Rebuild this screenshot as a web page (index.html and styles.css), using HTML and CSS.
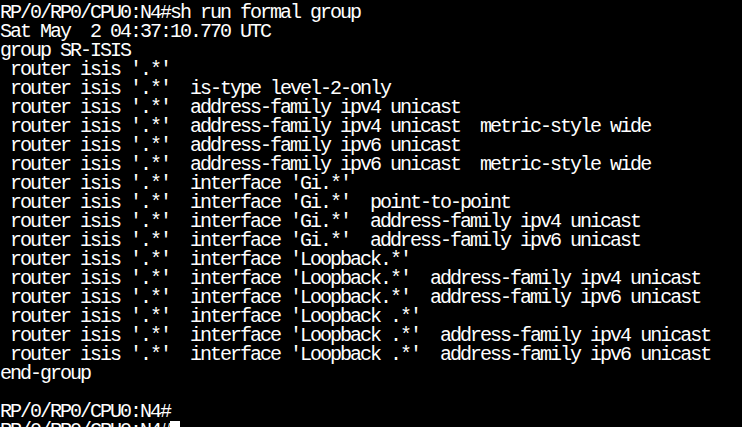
FILE: index.html
```html
<!DOCTYPE html>
<html>
<head>
<meta charset="utf-8">
<link rel="stylesheet" href="styles.css">
</head>
<body>
<pre class="term">RP/0/RP0/CPU0:N4#sh run formal group
Sat May  2 04:37:10.770 UTC
group SR-ISIS
 router isis '.*'
 router isis '.*'  is-type level-2-only
 router isis '.*'  address-family ipv4 unicast
 router isis '.*'  address-family ipv4 unicast  metric-style wide
 router isis '.*'  address-family ipv6 unicast
 router isis '.*'  address-family ipv6 unicast  metric-style wide
 router isis '.*'  interface 'Gi.*'
 router isis '.*'  interface 'Gi.*'  point-to-point
 router isis '.*'  interface 'Gi.*'  address-family ipv4 unicast
 router isis '.*'  interface 'Gi.*'  address-family ipv6 unicast
 router isis '.*'  interface 'Loopback.*'
 router isis '.*'  interface 'Loopback.*'  address-family ipv4 unicast
 router isis '.*'  interface 'Loopback.*'  address-family ipv6 unicast
 router isis '.*'  interface 'Loopback .*'
 router isis '.*'  interface 'Loopback .*'  address-family ipv4 unicast
 router isis '.*'  interface 'Loopback .*'  address-family ipv6 unicast
end-group

RP/0/RP0/CPU0:N4#
RP/0/RP0/CPU0:N4#<span class="cursor"> </span></pre>
</body>
</html>
```

FILE: styles.css
```css
html, body {
  margin: 0;
  padding: 0;
  background: #000;
  overflow: hidden;
}
.term {
  margin: 0;
  padding: 3px 0 0 0;
  color: #fff;
  font-family: "Liberation Mono", monospace;
  font-size: 20px;
  letter-spacing: -2px;
  line-height: 19px;
  white-space: pre;
}
.cursor {
  background: #fff;
  display: inline-block;
  width: 10px;
  height: 19px;
  vertical-align: top;
}
```
